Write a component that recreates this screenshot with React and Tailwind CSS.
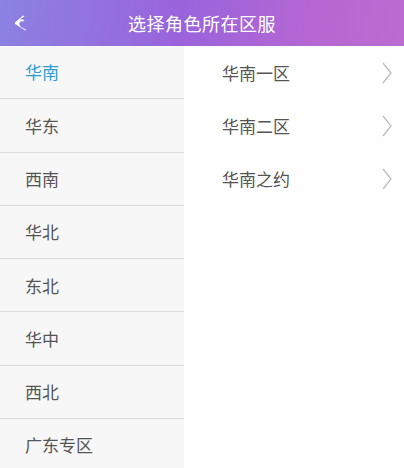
import React from 'react';

const regions = ['华南', '华东', '西南', '华北', '东北', '华中', '西北', '广东专区'];
const servers = ['华南一区', '华南二区', '华南之约'];

const font = { fontFamily: '"Noto Sans CJK SC", "Noto Sans", sans-serif' };

const App = () => {
  return (
    <div className="w-[404px] h-[468px] overflow-hidden bg-white flex flex-col" style={font}>
      {/* Header */}
      <div className="h-[46px] shrink-0 flex items-center relative bg-[linear-gradient(100deg,#8b82e2_0%,#9a63dc_45%,#b867d2_80%,#bb6cd0_100%)]">
        <svg className="absolute left-[14px] top-[15px]" width="13" height="16" viewBox="0 0 13 16">
          <path d="M9 0.5 L1 7.5 Q0.5 8.3 1.2 9 L11.5 15.5 L12 14.5 C6 12 4 9.5 6 7 Q7 5.8 9 6.5 L10.5 5.5 Q8 3.5 5.5 4.5 L10.5 1.2 Z" fill="#fff" />
        </svg>
        <span className="w-full text-center text-white text-[18px] leading-none tracking-[0.5px]">选择角色所在区服</span>
      </div>

      <div className="flex flex-1 min-h-0">
        {/* Region list */}
        <div className="w-[184px] shrink-0 bg-[#f7f7f7] flex flex-col">
          {regions.map((r, i) => (
            <div
              key={r}
              className={`h-[53.3px] shrink-0 flex items-center pl-[25px] text-[17px] border-b border-[#dcdcdc] ${
                i === 0 ? 'text-[#2b9dd3]' : 'text-[#555555]'
              }`}
            >
              {r}
            </div>
          ))}
        </div>

        {/* Server list */}
        <div className="flex-1 flex flex-col">
          {servers.map((s) => (
            <div key={s} className="h-[53.3px] shrink-0 flex items-center justify-between pl-[38px] pr-[12px]">
              <span className="text-[17px] text-[#555555]">{s}</span>
              <svg width="10" height="22" viewBox="0 0 10 22">
                <path d="M1 1 L9 11 L1 21" fill="none" stroke="#bdbdbd" strokeWidth="1.3" />
              </svg>
            </div>
          ))}
        </div>
      </div>
    </div>
  );
};

export default App;
